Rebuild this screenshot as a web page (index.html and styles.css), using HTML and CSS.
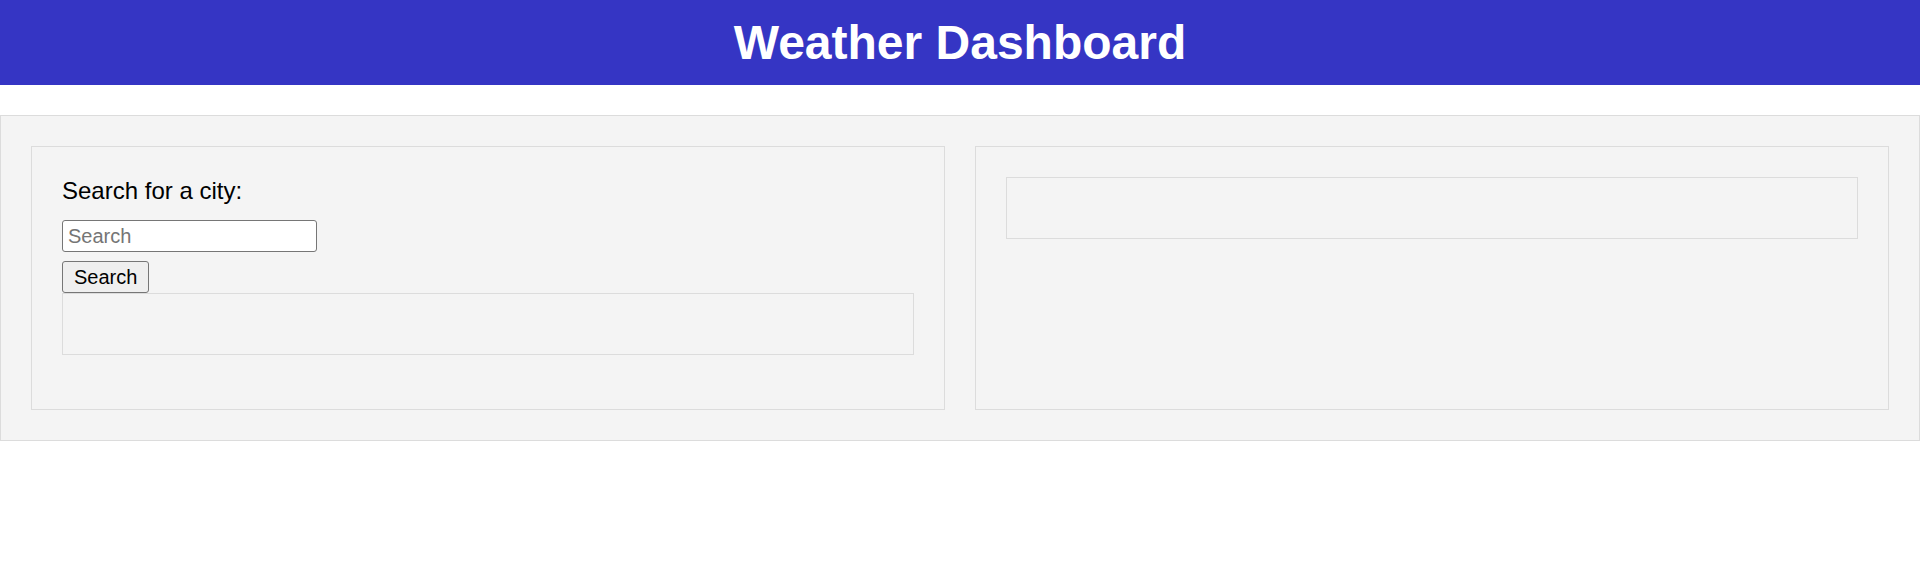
FILE: index.html
```html
<!DOCTYPE html>
<html lang="en">
<head>
<meta charset="utf-8">
<title>Weather Dashboard</title>
<link rel="stylesheet" href="styles.css">
</head>
<body>
<header class="site-header">
  <h1 class="site-title">Weather Dashboard</h1>
</header>
<main class="dashboard">
  <section class="panel panel-search">
    <label class="search-label" for="city">Search for a city:</label>
    <input class="search-input" id="city" type="text" placeholder="Search">
    <button class="search-button" type="button">Search</button>
    <div class="result-box history-box"></div>
  </section>
  <section class="panel panel-weather">
    <div class="result-box"></div>
  </section>
</main>
</body>
</html>
```
FILE: styles.css
```css
html, body {
  margin: 0;
  padding: 0;
  background: #ffffff;
  font-family: "Liberation Sans", Arial, sans-serif;
  color: #000;
}

.site-header {
  background: #3535c4;
  padding: 15px 0;
}

.site-title {
  margin: 0;
  color: #ffffff;
  font-size: 48px;
  line-height: 55px;
  font-weight: bold;
  text-align: center;
}

.dashboard {
  margin-top: 30px;
  background: #f4f4f4;
  border: 1px solid #dcdcdc;
  padding: 30px;
  display: grid;
  grid-template-columns: 1fr 1fr;
  gap: 30px;
}

.panel {
  border: 1px solid #dcdcdc;
  background: #f4f4f4;
  padding: 30px;
  display: flex;
  flex-direction: column;
  align-items: flex-start;
  min-height: 202px;
}

.search-label {
  font-size: 24px;
  line-height: 28px;
  margin-bottom: 15px;
}

.search-input {
  box-sizing: border-box;
  width: 255px;
  height: 32px;
  font-family: "Liberation Sans", Arial, sans-serif;
  font-size: 20px;
  padding: 0 5px;
  border: 1px solid #767676;
  border-radius: 3px;
  background: #ffffff;
  margin: 0 0 9px 0;
}

.search-input::placeholder {
  color: #757575;
}

.search-button {
  box-sizing: border-box;
  height: 32px;
  font-family: "Liberation Sans", Arial, sans-serif;
  font-size: 20px;
  padding: 0 11px;
  border: 1px solid #767676;
  border-radius: 3px;
  background: #efefef;
  color: #000;
  margin: 0;
}

.result-box {
  align-self: stretch;
  border: 1px solid #dcdcdc;
  padding: 30px;
}
```
